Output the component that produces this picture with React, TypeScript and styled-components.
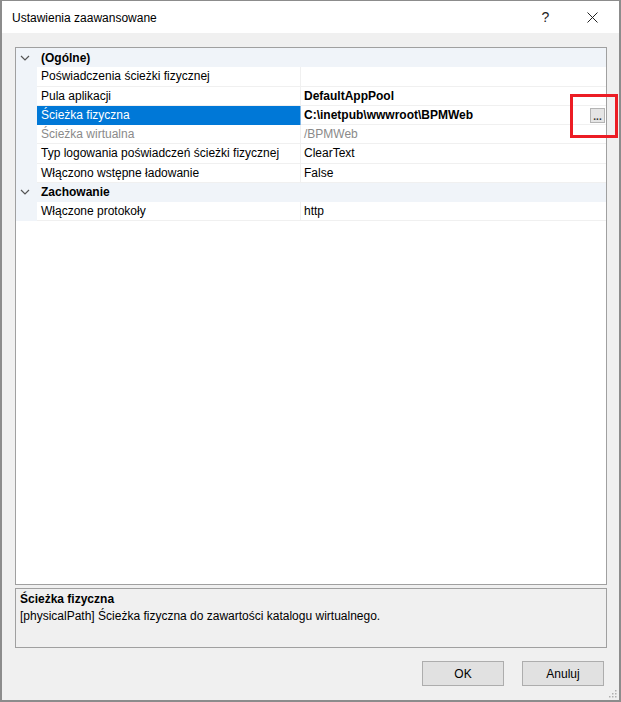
import React from 'react'
import styled, {createGlobalStyle} from 'styled-components'

const GlobalStyle = createGlobalStyle`
    html, body {
        margin: 0;
        padding: 0;
        background: #ffffff;
    }
    body {
        font-family: 'Liberation Sans', Arial, sans-serif;
        font-size: 12px;
        color: #000000;
    }
`

type Row =
    | {kind: 'category'; name: string}
    | {kind: 'prop'; name: string; value: string; bold?: boolean; readOnly?: boolean; selected?: boolean}

const rows: Row[] = [
    {kind: 'category', name: '(Ogólne)'},
    {kind: 'prop', name: 'Poświadczenia ścieżki fizycznej', value: ''},
    {kind: 'prop', name: 'Pula aplikacji', value: 'DefaultAppPool', bold: true},
    {kind: 'prop', name: 'Ścieżka fizyczna', value: 'C:\\inetpub\\wwwroot\\BPMWeb', bold: true, selected: true},
    {kind: 'prop', name: 'Ścieżka wirtualna', value: '/BPMWeb', readOnly: true},
    {kind: 'prop', name: 'Typ logowania poświadczeń ścieżki fizycznej', value: 'ClearText'},
    {kind: 'prop', name: 'Włączono wstępne ładowanie', value: 'False'},
    {kind: 'category', name: 'Zachowanie'},
    {kind: 'prop', name: 'Włączone protokoły', value: 'http'},
]

const Window = styled.div`
    position: relative;
    box-sizing: border-box;
    width: 621px;
    height: 702px;
    display: flex;
    flex-direction: column;
    background: #f0f0f0;
    border: 1px solid #8c8c8c;
    border-left-width: 2px;
    border-right-width: 2px;
    border-bottom-width: 2px;
`

const TitleBar = styled.div`
    height: 32px;
    display: flex;
    align-items: center;
    background: #ffffff;
    padding-left: 10px;
    padding-right: 3px;
`

const Title = styled.div`
    flex: 1;
    font-size: 12px;
    padding-top: 2px;
`

const TitleButton = styled.div`
    width: 47px;
    height: 32px;
    display: flex;
    align-items: center;
    justify-content: center;
    font-size: 14px;
    color: #222;
`

const Body = styled.div`
    flex: 1;
    display: flex;
    flex-direction: column;
    padding: 14px 12px 14px 13px;
`

const Grid = styled.div`
    flex: 1;
    background: #ffffff;
    border: 1px solid #a0a0a0;
    display: flex;
    flex-direction: column;
`

const GridRow = styled.div`
    display: grid;
    grid-template-columns: 21px 263px 1px 1fr;
    height: 19.25px;
    background: #f0f4f9;
`

const Toggle = styled.div`
    display: flex;
    align-items: center;
    justify-content: center;
    padding-right: 3px;
`

const CategoryName = styled.div`
    grid-column: 2 / 5;
    font-weight: bold;
    padding-left: 4px;
    display: flex;
    align-items: center;
`

const NameCell = styled.div<{$selected?: boolean; $readOnly?: boolean}>`
    display: flex;
    align-items: center;
    padding-left: 4px;
    white-space: nowrap;
    overflow: hidden;
    background: ${p => (p.$selected ? '#0078d7' : '#ffffff')};
    color: ${p => (p.$selected ? '#ffffff' : p.$readOnly ? '#8a8a8a' : '#000000')};
    border-bottom: 1px solid ${p => (p.$selected ? '#0078d7' : '#f0f0f0')};
`

const Divider = styled.div<{$selected?: boolean}>`
    background: ${p => (p.$selected ? '#7fb6e6' : '#f0f0f0')};
`

const ValueCell = styled.div<{$bold?: boolean; $readOnly?: boolean}>`
    display: flex;
    align-items: center;
    padding-left: 3px;
    padding-right: 1px;
    white-space: nowrap;
    background: #ffffff;
    font-weight: ${p => (p.$bold ? 'bold' : 'normal')};
    color: ${p => (p.$readOnly ? '#8a8a8a' : '#000000')};
    border-bottom: 1px solid #f0f0f0;
`

const ValueText = styled.span`
    flex: 1;
`

const EllipsisButton = styled.div`
    width: 15px;
    height: 15px;
    margin-top: 1px;
    box-sizing: border-box;
    background: #e5e5e5;
    border: 1px solid #b4b4b4;
    display: flex;
    align-items: flex-end;
    justify-content: center;
    font-size: 10px;
    line-height: 10px;
    font-weight: bold;
    color: #333;
`

const Description = styled.div`
    height: 60px;
    margin-top: 3px;
    box-sizing: border-box;
    border: 1px solid #a0a0a0;
    padding: 3px 4px;
    display: flex;
    flex-direction: column;
    gap: 3px;
`

const DescTitle = styled.div`
    font-weight: bold;
`

const ButtonRow = styled.div`
    display: flex;
    justify-content: flex-end;
    gap: 18px;
    margin-top: 13px;
    padding-right: 3px;
`

const DialogButton = styled.div`
    width: 82px;
    height: 25px;
    box-sizing: border-box;
    background: #e1e1e1;
    border: 1px solid #adadad;
    display: flex;
    align-items: center;
    justify-content: center;
`

const Highlight = styled.div`
    position: absolute;
    left: 568px;
    top: 93px;
    width: 48px;
    height: 44px;
    box-sizing: border-box;
    border: 3px solid #ec1c24;
`

const Grip = styled.svg`
    position: absolute;
    right: 2px;
    bottom: 2px;
`

const Chevron = () => (
    <svg width="10" height="6" viewBox="0 0 10 6">
        <path d="M1 1 L5 5 L9 1" fill="none" stroke="#555" strokeWidth="1.2" />
    </svg>
)

export default function App() {
    return (
        <>
            <GlobalStyle />
            <Window>
                <TitleBar>
                    <Title>Ustawienia zaawansowane</Title>
                    <TitleButton>?</TitleButton>
                    <TitleButton>
                        <svg width="11" height="11" viewBox="0 0 11 11">
                            <path d="M0.5 0.5 L10.5 10.5 M10.5 0.5 L0.5 10.5" stroke="#222" strokeWidth="1" />
                        </svg>
                    </TitleButton>
                </TitleBar>
                <Body>
                    <Grid>
                        {rows.map((row, i) =>
                            row.kind === 'category' ? (
                                <GridRow key={i}>
                                    <Toggle>
                                        <Chevron />
                                    </Toggle>
                                    <CategoryName>{row.name}</CategoryName>
                                </GridRow>
                            ) : (
                                <GridRow key={i}>
                                    <div />
                                    <NameCell $selected={row.selected} $readOnly={row.readOnly}>
                                        {row.name}
                                    </NameCell>
                                    <Divider $selected={row.selected} />
                                    <ValueCell $bold={row.bold} $readOnly={row.readOnly}>
                                        <ValueText>{row.value}</ValueText>
                                        {row.selected && <EllipsisButton>...</EllipsisButton>}
                                    </ValueCell>
                                </GridRow>
                            )
                        )}
                    </Grid>
                    <Description>
                        <DescTitle>Ścieżka fizyczna</DescTitle>
                        <div>[physicalPath] Ścieżka fizyczna do zawartości katalogu wirtualnego.</div>
                    </Description>
                    <ButtonRow>
                        <DialogButton>OK</DialogButton>
                        <DialogButton>Anuluj</DialogButton>
                    </ButtonRow>
                </Body>
                <Highlight />
                <Grip width="8" height="8" viewBox="0 0 8 8">
                    <rect x="6" y="0" width="1.5" height="1.5" fill="#b0b0b0" />
                    <rect x="3" y="3" width="1.5" height="1.5" fill="#b0b0b0" />
                    <rect x="6" y="3" width="1.5" height="1.5" fill="#b0b0b0" />
                    <rect x="0" y="6" width="1.5" height="1.5" fill="#b0b0b0" />
                    <rect x="3" y="6" width="1.5" height="1.5" fill="#b0b0b0" />
                    <rect x="6" y="6" width="1.5" height="1.5" fill="#b0b0b0" />
                </Grip>
            </Window>
        </>
    )
}
